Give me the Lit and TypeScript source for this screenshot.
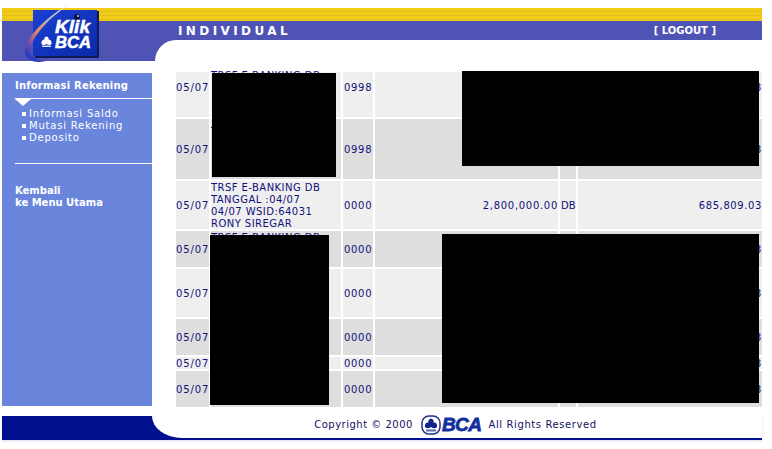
import { LitElement, html, css, svg } from "lit";
import { customElement } from "lit/decorators.js";

const THREE_LINES = ["TRSF E-BANKING DB", "\u00a0", "\u00a0"];
const FOUR_LINES = ["TRSF E-BANKING DB", "\u00a0", "\u00a0", "\u00a0"];

type Row = { date: string; desc: string[]; code: string; amount: string; dc: string; bal: string };
const rows: Row[] = [
  { date: "05/07", desc: THREE_LINES, code: "0998", amount: "", dc: "", bal: "3" },
  { date: "05/07", desc: FOUR_LINES, code: "0998", amount: "", dc: "", bal: "3" },
  {
    date: "05/07",
    desc: ["TRSF E-BANKING DB", "TANGGAL :04/07", "04/07 WSID:64031", "RONY SIREGAR"],
    code: "0000",
    amount: "2,800,000.00",
    dc: "DB",
    bal: "685,809.03",
  },
  { date: "05/07", desc: THREE_LINES, code: "0000", amount: "", dc: "", bal: "3" },
  { date: "05/07", desc: [], code: "0000", amount: "", dc: "", bal: "3" },
  { date: "05/07", desc: [], code: "0000", amount: "", dc: "", bal: "3" },
  { date: "05/07", desc: [], code: "0000", amount: "", dc: "", bal: "3" },
  { date: "05/07", desc: [], code: "0000", amount: "", dc: "", bal: "3" },
];

// Redaction blocks, offsets from the table's top-left corner: left, top, width, height
const redactions = [
  [36, 1, 124, 104],
  [286, -1, 297, 95],
  [34, 163, 119, 170],
  [266, 162, 317, 169],
];

const klikLogo = svg`
  <svg class="klik" width="90" height="70" viewBox="0 0 90 70">
    <defs>
      <linearGradient id="sw" x1="0.9" y1="0" x2="0.3" y2="1">
        <stop offset="0" stop-color="#f4efc8"/>
        <stop offset=".35" stop-color="#a8b4c8"/>
        <stop offset=".62" stop-color="#e88a58"/>
        <stop offset=".85" stop-color="#7a4ea8"/>
        <stop offset="1" stop-color="#2c3cc0"/>
      </linearGradient>
      <linearGradient id="box" x1="0" y1="0" x2="1" y2="1">
        <stop offset="0" stop-color="#1c40d4"/>
        <stop offset="1" stop-color="#0a2aa8"/>
      </linearGradient>
    </defs>
    <rect x="15" y="11" width="64" height="47" fill="#101a58"/>
    <rect x="13" y="10" width="64" height="46" fill="url(#box)"/>
    <path d="M50 4 C30 14 8 34 5 50 C4 60 16 66 32 59 C20 62 9 58 10 49 C13 34 34 14 50 4Z" fill="url(#sw)"/>
    <circle cx="57" cy="17" r="3" fill="#0a1040"/>
    <circle cx="58" cy="16" r="1" fill="#c8d0f0"/>
    <text x="35" y="33" class="kt" textLength="35" lengthAdjust="spacingAndGlyphs">Klik</text>
    <text x="35" y="48" class="kt kb" textLength="36" lengthAdjust="spacingAndGlyphs">BCA</text>
    <path d="M26.500 36.500 C28.500 37 29 38.500 28.500 39.500 C30.500 39.500 32 41 31.500 44 C30 45.500 28 45 26.500 44 C25 45 23 45.500 21.500 44 C21 41 22.500 39.500 24.500 39.500 C24 38.500 24.500 37 26.500 36.500Z" fill="#fff"/>
    <rect x="22" y="45.500" width="9" height="1.500" fill="#dfe4fa"/>
  </svg>`;

const bcaMark = svg`
  <svg width="20" height="20" viewBox="0 0 20 20" class="mark">
    <rect x="1" y="1" width="18" height="18" rx="7" fill="#fff" stroke="#1f2f8c" stroke-width="1.500"/>
    <path d="M10 3.500 C12.500 4 13 6 12.500 7.500 C15 7 16.500 9 16 12 C14 14 12 13.500 10 12 C8 13.500 6 14 4 12 C3.500 9 5 7 7.500 7.500 C7 6 7.500 4 10 3.500Z" fill="#12248c"/>
    <rect x="5" y="14.500" width="10" height="2" fill="#5a68b0"/>
  </svg>`;

@customElement("app-root")
export class AppRoot extends LitElement {
  static styles = css`
    :host {
      display: block;
      width: 772px;
      height: 449px;
      overflow: hidden;
      background: #fff;
      font-family: "DejaVu Sans", Verdana, sans-serif;
      font-size: 10px;
    }
    .page {
      position: relative;
      width: 760px;
      padding: 8px 0 0 2px;
    }
    .stripes {
      height: 13px;
      background: repeating-linear-gradient(to bottom, #f0cd14 0 3px, #e2bd22 3px 4px);
    }
    .bar {
      height: 19px;
      background: #4f53b3;
      display: flex;
      align-items: center;
      justify-content: space-between;
      padding: 0 46px 0 176px;
      color: #fff;
      font-weight: bold;
    }
    .title {
      font-size: 12px;
      letter-spacing: 3.400px;
    }
    .logout {
      font-size: 10px;
      letter-spacing: 0;
    }
    .under {
      height: 21px;
      background: #4f53b3;
      padding-left: 153px;
    }
    .under div {
      height: 100%;
      background: #fff;
      border-top-left-radius: 22px;
    }
    .klik {
      position: absolute;
      left: 20px;
      top: 0;
    }
    .kt {
      font-family: "Liberation Sans", sans-serif;
      font-weight: bold;
      font-style: italic;
      font-size: 18px;
      fill: #fff;
      stroke: #fff;
      stroke-width: 0.500px;
    }
    .kb {
      font-size: 16px;
    }
    .main {
      display: flex;
      align-items: flex-start;
      height: 355px;
    }
    .side {
      width: 150px;
      height: 333px;
      margin-top: 12px;
      background: #6a86dc;
      color: #fff;
      padding-left: 13px;
      box-sizing: border-box;
    }
    .side h3 {
      margin: 0;
      height: 25px;
      line-height: 25px;
      font-size: 10px;
      font-weight: bold;
      letter-spacing: 0.200px;
      border-bottom: 1px solid #fff;
    }
    .tri {
      width: 0;
      height: 0;
      border-left: 8px solid transparent;
      border-right: 8px solid transparent;
      border-top: 7px solid #fff;
    }
    .menu {
      list-style: none;
      margin: 0;
      padding: 2px 0 0 7px;
    }
    .menu li {
      height: 12px;
      line-height: 12px;
      letter-spacing: 0.800px;
      display: flex;
      align-items: center;
      gap: 3px;
    }
    .menu li::before {
      content: "";
      width: 4px;
      height: 4px;
      background: #fff;
    }
    .rule {
      margin-top: 19px;
      border-top: 1px solid #fff;
    }
    .back {
      margin-top: 21px;
      font-weight: bold;
      line-height: 12px;
      letter-spacing: 0;
    }
    .tablewrap {
      position: relative;
      margin: 11px 0 0 24px;
    }
    .table {
      display: grid;
      grid-template-columns: 33px 130px 30px 183px 16px 184px;
      grid-template-rows: 45px 60px 48px 36px 48px 36px 12px 36px;
      gap: 2px;
      color: #10107a;
    }
    .cell {
      display: flex;
      align-items: center;
      white-space: nowrap;
      line-height: 12px;
      padding-top: 2px;
    }
    .first {
      padding-top: 0;
      padding-bottom: 14px;
    }
    .light { background: #efefef; }
    .dark { background: #dedede; }
    .date { letter-spacing: 0.900px; }
    .code { padding-left: 1px; letter-spacing: 0.700px; }
    .amount { justify-content: flex-end; letter-spacing: 0.700px; }
    .dc { padding-left: 1px; }
    .bal { justify-content: flex-end; letter-spacing: 0.600px; }
    .desc { letter-spacing: 0.450px; }
    .black {
      position: absolute;
      background: #000;
    }
    .footer {
      background: #00108f;
      height: 24px;
      padding-left: 150px;
      box-shadow: 0 1px 2px rgba(0, 16, 143, 0.15);
    }
    .foot {
      height: 22px;
      background: #fff;
      border-bottom-left-radius: 30px 22px;
      display: flex;
      align-items: center;
      justify-content: center;
      color: #12125e;
      letter-spacing: 0.500px;
      padding: 0 3px 5px 0;
      box-sizing: border-box;
    }
    .mark { margin-left: 8px; }
    .bca {
      font-family: "Liberation Sans", sans-serif;
      font-weight: bold;
      font-style: italic;
      font-size: 19px;
      letter-spacing: -0.500px;
      color: #12309c;
      margin: 0 7px 0 1px;
      -webkit-text-stroke: 0.800px #12309c;
    }
    .rights { letter-spacing: 0.600px; }
  `;

  render() {
    return html`
      <div class="page">
        <div class="stripes"></div>
        <div class="bar">
          <span class="title">INDIVIDUAL</span>
          <span class="logout">[ LOGOUT ]</span>
        </div>
        <div class="under"><div></div></div>
        ${klikLogo}
        <div class="main">
          <nav class="side">
            <h3>Informasi Rekening</h3>
            <div class="tri"></div>
            <ul class="menu">
              <li>Informasi Saldo</li>
              <li>Mutasi Rekening</li>
              <li>Deposito</li>
            </ul>
            <div class="rule"></div>
            <div class="back">Kembali<br />ke Menu Utama</div>
          </nav>
          <div class="tablewrap">
            <div class="table">
              ${rows.map((r, i) => {
                const tone = (i % 2 === 0 ? "light" : "dark") + (i === 0 ? " first" : "");
                return html`
                  <div class="cell date ${tone}">${r.date}</div>
                  <div class="cell desc ${tone}">
                    <div>${r.desc.map((l) => html`${l}<br />`)}</div>
                  </div>
                  <div class="cell code ${tone}">${r.code}</div>
                  <div class="cell amount ${tone}">${r.amount}</div>
                  <div class="cell dc ${tone}">${r.dc}</div>
                  <div class="cell bal ${tone}">${r.bal}</div>
                `;
              })}
            </div>
            ${redactions.map(
              ([l, t, w, h]) =>
                html`<div class="black" style="left:${l}px;top:${t}px;width:${w}px;height:${h}px"></div>`
            )}
          </div>
        </div>
        <div class="footer">
          <div class="foot">
            Copyright © 2000 ${bcaMark}<span class="bca">BCA</span><span class="rights">All Rights Reserved</span>
          </div>
        </div>
      </div>
    `;
  }
}
